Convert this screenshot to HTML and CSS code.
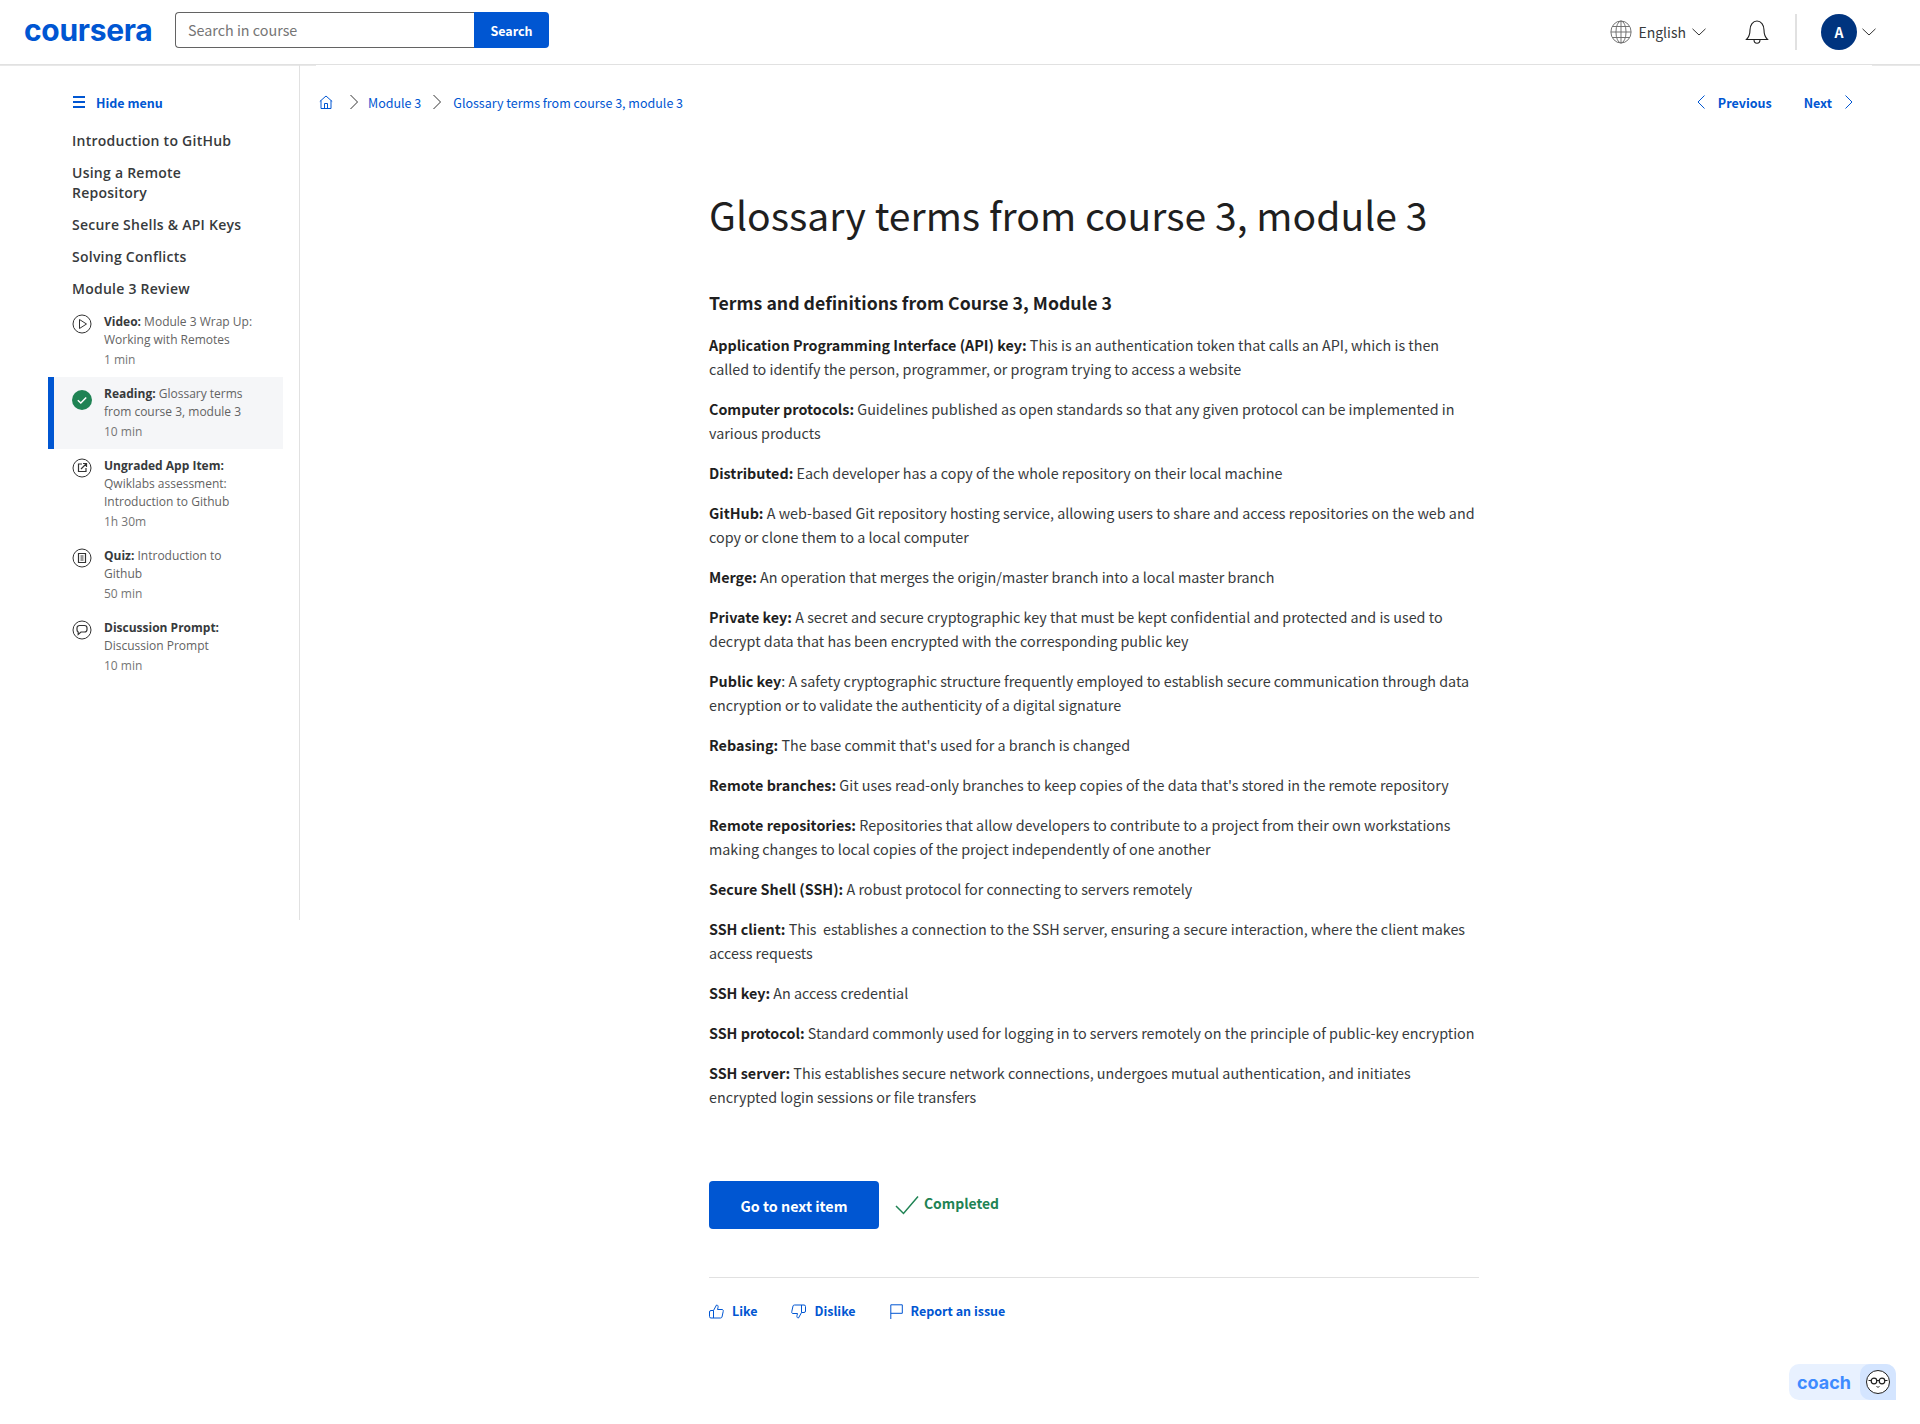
FILE: index.html
```html
<!DOCTYPE html>
<html lang="en">
<head>
    <meta charset="UTF-8">
    <title>Glossary terms from course 3, module 3</title>
    <link rel="stylesheet" href="styles.css">
</head>
<body>
    <header class="topbar">
        <div class="logo">coursera</div>
        <div class="search">
            <div class="search-input">Search in course</div>
            <button class="search-btn">Search</button>
        </div>
        <div class="topbar-right">
            <svg class="globe" width="22" height="24" viewBox="0 0 24 24" preserveAspectRatio="none" fill="none" stroke="#6f6f6f" stroke-width="1">
                <circle cx="12" cy="12" r="11"/>
                <ellipse cx="12" cy="12" rx="5.5" ry="11"/>
                <path d="M12 1v22M1 12h22M2.6 6.5h18.8M2.6 17.5h18.8"/>
            </svg>
            <span class="lang">English</span>
            <svg class="chev-down" width="14" height="8" viewBox="0 0 14 8" fill="none" stroke="#333" stroke-width="1"><path d="M.5.8 7 7 13.5.8"/></svg>
            <svg class="bell" width="24" height="26" viewBox="0 0 24 26" fill="none" stroke="#1f1f1f" stroke-width="1.1">
                <path d="M1.5 20.5c3-3 3.5-5 3.5-9.500C5 6 8 2 12 2s7 4 7 9c0 4.500.5 6.500 3.500 9.500z"/>
                <path d="M9 20.500c0 5 6 5 6 0"/>
            </svg>
            <div class="vline"></div>
            <div class="avatar">A</div>
            <svg class="chev-down" width="14" height="8" viewBox="0 0 14 8" fill="none" stroke="#333" stroke-width="1"><path d="M.5.8 7 7 13.5.8"/></svg>
        </div>
    </header>

    <div class="page">
        <aside class="sidebar">
            <div class="hide-menu">
                <svg width="12" height="12" viewBox="0 0 12 12" fill="#0056d2"><path d="M0 0h12v2H0zM0 5h12v2H0zM0 10h12v2H0z"/></svg>
                <span>Hide menu</span>
            </div>
            <ul class="lessons">
                <li>Introduction to GitHub</li>
                <li>Using a Remote Repository</li>
                <li>Secure Shells &amp; API Keys</li>
                <li>Solving Conflicts</li>
                <li>Module 3 Review</li>
            </ul>
            <div class="items">
                <div class="item">
                    <svg class="item-icon" width="20" height="20" viewBox="0 0 20 20" fill="none" stroke="#333"><circle cx="10" cy="10" r="9"/><path d="M7.500 5.500v9l7-4.500z"/></svg>
                    <div class="item-text"><b>Video:</b> Module 3 Wrap Up: Working with Remotes<small>1 min</small></div>
                </div>
                <div class="item active">
                    <svg class="item-icon" width="20" height="20" viewBox="0 0 20 20" fill="none"><circle cx="10" cy="10" r="10" fill="#1f8354"/><path d="M5.800 10.300 8.800 13l5.400-5.600" stroke="#fff" stroke-width="1.500"/></svg>
                    <div class="item-text"><b>Reading:</b> Glossary terms from course 3, module 3<small>10 min</small></div>
                </div>
                <div class="item">
                    <svg class="item-icon" width="20" height="20" viewBox="0 0 20 20" fill="none" stroke="#333"><circle cx="10" cy="10" r="9"/><path d="M10 6H6.500v7.500H14V10M9 11l5.500-5.500M11 5.500h3.500V9" stroke-width="1.200"/></svg>
                    <div class="item-text"><b>Ungraded App Item:</b> Qwiklabs assessment: Introduction to Github<small>1h 30m</small></div>
                </div>
                <div class="item">
                    <svg class="item-icon" width="20" height="20" viewBox="0 0 20 20" fill="none" stroke="#333"><circle cx="10" cy="10" r="9"/><path d="M6.500 5.500h7v9h-7zM8.500 8h3M8.500 10h3M8.500 12h3" stroke-width="1.200"/></svg>
                    <div class="item-text"><b>Quiz:</b> Introduction to Github<small>50 min</small></div>
                </div>
                <div class="item">
                    <svg class="item-icon" width="20" height="20" viewBox="0 0 20 20" fill="none" stroke="#333"><circle cx="10" cy="10" r="9"/><path d="M7.500 5.500h5a2.500 2.500 0 0 1 2.500 2.500v1.500a2.500 2.500 0 0 1-2.500 2.500H9l-2.800 2.500V12A2.500 2.500 0 0 1 5 9.500V8a2.500 2.500 0 0 1 2.500-2.500z" stroke-width="1.200"/></svg>
                    <div class="item-text"><b>Discussion Prompt:</b> Discussion Prompt<small>10 min</small></div>
                </div>
            </div>
        </aside>

        <main class="content">
            <nav class="crumbs">
                <svg class="home" width="14" height="14" viewBox="0 0 14 14" fill="none" stroke="#0056d2"><path d="M.8 6.500 7 1l6.200 5.500M2 5.500v8h10v-8M5.500 13.500v-5h3v5"/></svg>
                <svg class="sep" width="8" height="16" viewBox="0 0 8 16" fill="none" stroke="#333"><path d="M.5 1 7.500 8l-7 7"/></svg>
                <a>Module 3</a>
                <svg class="sep" width="8" height="16" viewBox="0 0 8 16" fill="none" stroke="#333"><path d="M.5 1 7.500 8l-7 7"/></svg>
                <a>Glossary terms from course 3, module 3</a>
                <div class="pager">
                    <svg width="8" height="14" viewBox="0 0 8 14" fill="none" stroke="#0056d2"><path d="M7.500.5 1 7l6.500 6.500"/></svg>
                    <a class="prev">Previous</a>
                    <a class="next">Next</a>
                    <svg width="8" height="14" viewBox="0 0 8 14" fill="none" stroke="#0056d2"><path d="M.5.5 7 7 .5 13.500"/></svg>
                </div>
            </nav>

            <article class="article">
                <h1>Glossary terms from course 3, module 3</h1>
                <h2>Terms and definitions from Course 3, Module 3</h2>
                <p><b>Application Programming Interface (API) key:</b> This is an authentication token that calls an API, which is then called to identify the person, programmer, or program trying to access a website</p>
                <p><b>Computer protocols:</b> Guidelines published as open standards so that any given protocol can be implemented in various products</p>
                <p><b>Distributed:</b> Each developer has a copy of the whole repository on their local machine</p>
                <p><b>GitHub:</b> A web-based Git repository hosting service, allowing users to share and access repositories on the web and copy or clone them to a local computer</p>
                <p><b>Merge:</b> An operation that merges the origin/master branch into a local master branch</p>
                <p><b>Private key:</b> A secret and secure cryptographic key that must be kept confidential and protected and is used to decrypt data that has been encrypted with the corresponding public key</p>
                <p><b>Public key</b>: A safety cryptographic structure frequently employed to establish secure communication through data encryption or to validate the authenticity of a digital signature</p>
                <p><b>Rebasing:</b> The base commit that's used for a branch is changed</p>
                <p><b>Remote branches:</b> Git uses read-only branches to keep copies of the data that's stored in the remote repository</p>
                <p><b>Remote repositories:</b> Repositories that allow developers to contribute to a project from their own workstations making changes to local copies of the project independently of one another</p>
                <p><b>Secure Shell (SSH):</b> A robust protocol for connecting to servers remotely</p>
                <p><b>SSH client:</b> This&nbsp; establishes a connection to the SSH server, ensuring a secure interaction, where the client makes access requests</p>
                <p><b>SSH key:</b> An access credential</p>
                <p><b>SSH protocol:</b> Standard commonly used for logging in to servers remotely on the principle of public-key encryption</p>
                <p><b>SSH server:</b> This establishes secure network connections, undergoes mutual authentication, and initiates encrypted login sessions or file transfers</p>

                <div class="actions">
                    <button class="next-btn">Go to next item</button>
                    <svg width="24" height="20" viewBox="0 0 24 20" fill="none" stroke="#1f8354" stroke-width="1.500"><path d="M1 11l7.500 7.500L23 1.500"/></svg>
                    <span class="done">Completed</span>
                </div>

                <div class="feedback">
                    <a>
                        <svg width="15" height="15" viewBox="0 0 15 15" fill="none" stroke="#0056d2"><path d="M4.500 6.500 7.500 1c1.500 0 1.800 1.200 1.500 2.500L8.500 5.500h4.500c1.200 0 1.500 1 1.200 2l-1.200 5.500c-.2.700-.7 1-1.500 1H2a1.500 1.500 0 0 1-1.500-1.500V8A1.500 1.500 0 0 1 2 6.500zM4.500 6.500v7.500"/></svg>
                        Like
                    </a>
                    <a>
                        <svg width="15" height="15" viewBox="0 0 15 15" fill="none" stroke="#0056d2"><path d="M10.500 8.500 7.500 14c-1.500 0-1.800-1.200-1.500-2.500l.5-2H2c-1.200 0-1.500-1-1.200-2L2 2c.2-.7.7-1 1.500-1H13a1.500 1.500 0 0 1 1.500 1.500V7A1.500 1.500 0 0 1 13 8.500zM10.500 8.500V1"/></svg>
                        Dislike
                    </a>
                    <a>
                        <svg width="13" height="15" viewBox="0 0 13 15" fill="none" stroke="#0056d2"><path d="M.8 15V.8h11.500v8.500H.8"/></svg>
                        Report an issue
                    </a>
                </div>
            </article>
        </main>
    </div>

    <div class="coach">
        <span class="coach-word">coach</span>
        <div class="coach-face">
            <svg width="24" height="24" viewBox="0 0 24 24" fill="none" stroke="#1f1f1f">
                <circle cx="12" cy="12" r="11.500" fill="#fff"/>
                <circle cx="8" cy="11" r="2.800" stroke-width="1.200"/>
                <circle cx="16" cy="11" r="2.800" stroke-width="1.200"/>
                <path d="M2.500 10.500h2.700M10.800 10.500h2.400M18.800 10.500h2.700M10.500 16.500c1 .8 2 .8 3 0"/>
            </svg>
        </div>
    </div>
</body>
</html>
```

FILE: styles.css
```css
* {
    box-sizing: border-box;
}
body {
    margin: 0;
    background: #fff;
    color: #1f1f1f;
    font-family: "Noto Sans CJK SC", "Source Sans Pro", sans-serif;
    font-size: 14.33px;
    overflow: hidden;
}
a {
    color: #0056d2;
}

/* header */
.topbar {
    display: flex;
    align-items: center;
    height: 65px;
    padding-left: 24px;
    border-bottom: 1px solid #e1e1e1;
}
.logo {
    width: 151px;
    margin-top: -4px;
    font-family: Inter, sans-serif;
    font-weight: 700;
    font-size: 30px;
    letter-spacing: -0.3px;
    line-height: 28px;
    color: #0056d2;
}
.search {
    display: flex;
    height: 36px;
    margin-top: -4px;
}
.search-input {
    width: 299px;
    padding: 0 12px;
    line-height: 34px;
    font-size: 14.33px;
    color: #757575;
    border: 1px solid #636363;
    border-right: none;
    border-radius: 4px 0 0 4px;
}
.search-btn {
    width: 75px;
    border: none;
    border-radius: 0 4px 4px 0;
    background: #0056d2;
    color: #fff;
    font: 700 12.5px "Noto Sans CJK SC", sans-serif;
}
.topbar-right {
    display: flex;
    align-items: center;
    margin-left: auto;
    padding-right: 44px;
}
.lang {
    margin: 0 6px;
    font-size: 14px;
    color: #373a3c;
}
.bell {
    margin: 0 26px 0 39px;
}
.vline {
    width: 2px;
    height: 36px;
    background: #e1e1e1;
    margin-right: 24px;
}
.avatar {
    width: 36px;
    height: 36px;
    margin-right: 5px;
    border-radius: 50%;
    background: #00347f;
    color: #fff;
    font-weight: 700;
    font-size: 14px;
    line-height: 36px;
    text-align: center;
}

/* left menu */
.page {
    display: flex;
    align-items: flex-start;
    background: linear-gradient(to right, #e8e8e8 316px, transparent 316px, transparent 1872px, #e8e8e8 1872px) top / 100% 1px no-repeat;
}
.sidebar {
    width: 300px;
    height: 855px;
    padding: 25px 16px 0 48px;
    border-right: 1px solid #e1e1e1;
    font-family: "Open Sans", sans-serif;
    color: #373a3c;
}
.hide-menu {
    display: flex;
    align-items: center;
    gap: 11px;
    height: 24px;
    margin: 0 0 17px 25px;
    font-family: "Noto Sans CJK SC", sans-serif;
    font-weight: 700;
    font-size: 12.5px;
    color: #0056d2;
}
.lessons {
    list-style: none;
    margin: 0 0 -6px;
    padding: 0 40px 0 24px;
}
.lessons li {
    margin-bottom: 12px;
    font-size: 14px;
    font-weight: 600;
    letter-spacing: 0.25px;
    line-height: 20px;
}
.item {
    display: flex;
    gap: 12px;
    width: 235px;
    padding: 8px 29px 8px 24px;
    font-size: 12px;
    line-height: 18px;
    color: #636363;
}
.item b {
    font-weight: 700;
    color: #373a3c;
}
.item small {
    display: block;
    padding-top: 2px;
    font-size: 12px;
    line-height: 18px;
    color: #757575;
}
.item-icon {
    flex: none;
    margin-top: 1px;
}
.item.active {
    padding-left: 18px;
    border-left: 6px solid #0056d2;
    background: #f5f6f8;
}
.item.active .item-icon {
    margin-top: 5px;
}

/* main column */
.content {
    flex: 1;
}
.crumbs {
    display: flex;
    align-items: center;
    height: 24px;
    margin-top: 25px;
    padding: 0 67px 0 19px;
    font-size: 12.5px;
}
.crumbs a {
    color: #0056d2;
}
.home {
    margin-right: 17px;
}
.sep {
    margin-right: 10px;
}
.crumbs a + .sep {
    margin: 0 12px;
}
.pager {
    display: flex;
    align-items: center;
    margin-left: auto;
    font-weight: 700;
}
.prev {
    margin-left: 13px;
}
.next {
    margin: 0 13px 0 32px;
}
.article {
    width: 770px;
    margin: 0 0 0 409px;
}
h1 {
    margin: 72px 0 0;
    font-size: 39.1px;
    font-weight: 400;
    line-height: 56px;
    color: #1f1f1f;
}
h2 {
    margin: 46px 0 17px;
    font-size: 17.7px;
    font-weight: 700;
    line-height: 28px;
}
p {
    margin: 0 0 16px;
    line-height: 24px;
    color: #373a3c;
}
p b {
    color: #1f1f1f;
}
.actions {
    display: flex;
    align-items: center;
    margin-top: 72px;
}
.next-btn {
    width: 170px;
    height: 48px;
    margin-right: 16px;
    border: none;
    border-radius: 4px;
    background: #0056d2;
    color: #fff;
    font: 700 14.33px "Noto Sans CJK SC", sans-serif;
}
.done {
    margin: -4px 0 0 5px;
    font-weight: 700;
    font-size: 13.9px;
    color: #1f8354;
}
.feedback {
    display: flex;
    gap: 34px;
    margin-top: 48px;
    padding-top: 21px;
    border-top: 1px solid #e1e1e1;
    font-size: 12.5px;
    font-weight: 700;
}
.feedback a {
    display: flex;
    align-items: center;
    gap: 8px;
    line-height: 24px;
}

/* coach widget */
.coach {
    position: fixed;
    left: 1789px;
    top: 1364px;
    display: flex;
    width: 107px;
    height: 36px;
    border-radius: 10px 10px 0 10px;
    background: #e8f1ff;
}
.coach-word {
    flex: 1;
    padding-left: 8px;
    font-family: Inter, sans-serif;
    font-weight: 700;
    font-size: 18px;
    line-height: 37px;
    color: #3d8bff;
}
.coach-face {
    display: flex;
    align-items: center;
    justify-content: center;
    width: 36px;
    border-radius: 10px 10px 0 10px;
    background: #d4e5ff;
}
```
